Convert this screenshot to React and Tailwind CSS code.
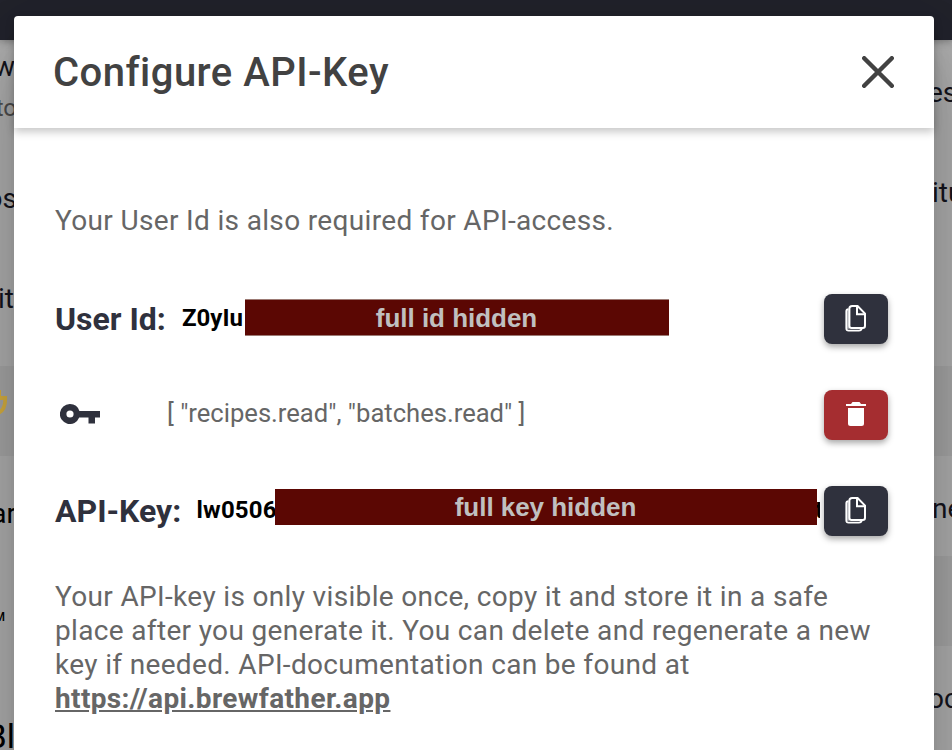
const leftRows = [
  { text: "New", cls: "h-[50px] text-[28px] leading-[54px] text-[#15151d]", shift: "-mr-[1px]" },
  { text: "to", cls: "h-[60px] text-[24px] leading-[37px] text-[#505050]", shift: "-mr-[3px]" },
  { text: "os", cls: "h-[100px] text-[28px] leading-[97px] text-[#15151d]", shift: "-mr-[3px]" },
  { text: "it", cls: "h-[116px] text-[28px] leading-[98px] text-[#15151d]", shift: "mr-0" },
];

const rightRows = [
  { text: "es", cls: "h-[100px] text-[28px] leading-[106px] text-[#15151d]", shift: "-ml-[6px]" },
  { text: "itu", cls: "h-[226px] text-[28px] leading-[106px] text-[#15151d]", shift: "-ml-[2px]" },
];

function CopyIcon() {
  return (
    <svg width="24" height="28" viewBox="0 0 24 28" fill="none" stroke="#fff" strokeWidth="2">
      <path d="M2.6 5 H5.4 V23.8 H2.6 Z" fill="#a3a4ab" stroke="none" />
      <path d="M8.2 1.1 H13.6 L21 8.6 V20.8 Q21 23 18.8 23 H7.4 Q5.4 23 5.4 20.8 V3.6 Q5.4 1.1 8.2 1.1 Z" />
      <path d="M13 1.4 V9.2 H21" />
      <path d="M4.6 4.2 Q2.3 4.4 2.3 6.2 V23.2 Q2.3 25.6 4.6 25.6 H15 Q17.2 25.6 18 23.4" strokeWidth="1.8" />
    </svg>
  );
}

function ActionButton({ color, label, children }) {
  return (
    <button
      aria-label={label}
      className={`flex h-[50px] w-16 shrink-0 items-center justify-center rounded-lg shadow-[0_3px_6px_rgba(0,0,0,0.35)] ${color}`}
    >
      {children}
    </button>
  );
}

function Backdrop() {
  return (
    <div className="flex h-full flex-col bg-[#b1b1b1]">
      <div className="z-10 h-10 shrink-0 bg-[#22232c] shadow-[0_1px_8px_rgba(0,0,0,0.35)]" />
      <div className="flex flex-1 justify-between">
        <div className="flex w-[14px] flex-col overflow-hidden">
          {leftRows.map((r) => (
            <div key={r.text} className={`flex shrink-0 justify-end ${r.cls}`}>
              <span className={r.shift}>{r.text}</span>
            </div>
          ))}
          <div className="h-[90px] shrink-0 bg-[#a8a8a8]">
            <svg width="14" height="90" viewBox="0 0 14 90" fill="none" stroke="#d8b040" strokeWidth="3.8">
              <path d="M-4 32 H5.2 Q5.6 44 -2 47" />
              <path d="M0 24 V32" strokeWidth="2" />
            </svg>
          </div>
          <div className="flex h-[100px] shrink-0 justify-end text-[28px] leading-[115px] text-black">
            <span className="-mr-[2px]">ar</span>
          </div>
          <div className="flex h-[90px] shrink-0 justify-end text-[12px] leading-[123px] font-medium text-black">
            <span className="mr-[9px]">M</span>
          </div>
          <div className="flex h-[104px] shrink-0 justify-end text-[34px] leading-[181px] text-black">
            <span className="-mr-[1px]">Bl</span>
          </div>
        </div>
        <div className="flex w-[18px] flex-col overflow-hidden">
          {rightRows.map((r) => (
            <div key={r.text} className={`flex shrink-0 ${r.cls}`}>
              <span className={r.shift}>{r.text}</span>
            </div>
          ))}
          <div className="h-[90px] shrink-0 bg-[#a8a8a8]" />
          <div className="h-[100px] shrink-0 text-[28px] leading-[106px] text-[#15151d]">
            <span className="-ml-[2px]">ne</span>
          </div>
          <div className="h-[90px] shrink-0 bg-[#a8a8a8]" />
          <div className="h-[104px] shrink-0 text-[28px] leading-[106px] text-[#15151d]">
            <span className="-ml-[6px]">oc</span>
          </div>
        </div>
      </div>
    </div>
  );
}

export default function App() {
  return (
    <div className="relative h-[750px] w-[952px] overflow-hidden font-[Roboto,sans-serif]">
      <Backdrop />
      <div className="absolute top-4 left-[14px] z-20 flex h-[800px] w-[920px] flex-col rounded-[4px] bg-white shadow-[0_22px_30px_-14px_rgba(0,0,0,0.2),0_48px_76px_6px_rgba(0,0,0,0.14),0_18px_92px_16px_rgba(0,0,0,0.12)]">
        <header className="flex h-28 shrink-0 items-center justify-between rounded-t-[4px] pr-10 pl-[39px] shadow-[0_4px_8px_rgba(0,0,0,0.22)]">
          <h1 className="mt-[2px] text-[40px] font-medium tracking-[0.47px] whitespace-nowrap text-[#424242]">Configure API-Key</h1>
          <button aria-label="Close">
            <svg width="32" height="32" viewBox="0 0 32 32" stroke="#424242" strokeWidth="4.4" strokeLinecap="round">
              <path d="M2.2 2.2 L29.8 29.8 M29.8 2.2 L2.2 29.8" />
            </svg>
          </button>
        </header>
        <main className="flex flex-col pr-[46px] pl-[41px]">
          <p className="mt-[76px] text-[28px] leading-[34px] tracking-[0.34px] whitespace-nowrap text-[#666]">
            Your User Id is also required for API-access.
          </p>
          <section className="mt-14 flex h-[50px] items-center justify-between">
            <div className="flex items-center">
              <h2 className="w-[127px] shrink-0 text-[32px] font-bold whitespace-nowrap text-[#2f313d]">User Id:</h2>
              <span className="-mt-[2px] w-[63px] shrink-0 text-[24px] font-bold whitespace-nowrap text-black">Z0yIu</span>
              <div className="-mt-[3px] flex h-[37px] w-[424px] items-center justify-center border-y border-[#9c7a74] bg-[#5b0703] font-['Liberation_Sans',sans-serif] text-[26px] font-bold text-[#c0c0c0]">
                <span className="mt-px mr-[1px] tracking-[-0.03px]">full id hidden</span>
              </div>
            </div>
            <ActionButton color="bg-[#2f313d]" label="Copy user id"><CopyIcon /></ActionButton>
          </section>
          <section className="mt-[46px] flex h-[50px] items-center">
            <svg className="-mt-[2px] ml-[5px] shrink-0" width="40" height="20" viewBox="0 0 40 20" fill="#2f313d">
              <path fillRule="evenodd" d="M10 0 A10 10 0 1 0 19.2 13.6 H28.5 V19.4 H35 V13.6 H40 V7 H19.4 A10 10 0 0 0 10 0 Z M10 6.4 A3.6 3.6 0 1 1 10 13.6 A3.6 3.6 0 1 1 10 6.4 Z" />
            </svg>
            <span className="-mt-[3px] ml-[67px] flex-1 text-[25.6px] whitespace-nowrap text-[#666]">[ "recipes.read", "batches.read" ]</span>
            <ActionButton color="bg-[#a52d30]" label="Delete key">
              <svg className="-mt-[2px]" width="20" height="24" viewBox="0 0 20 24" fill="#fff">
                <path d="M0 2 H5 L6.5 0 H13.5 L15 2 H20 V4 H0 Z M2 6 H18 V21.5 Q18 24 15.5 24 H4.5 Q2 24 2 21.5 Z" />
              </svg>
            </ActionButton>
          </section>
          <section className="mt-[46px] flex h-[50px] items-center">
            <h2 className="w-[141.5px] shrink-0 text-[32px] font-bold whitespace-nowrap text-[#2f313d]">API-Key:</h2>
            <span className="-mt-[2px] w-[78.5px] shrink-0 text-[24px] font-bold tracking-[0.2px] whitespace-nowrap text-black">lw0506</span>
            <div className="-mt-[8px] flex h-9 w-[542px] shrink-0 items-center justify-center bg-[#5b0703] font-['Liberation_Sans',sans-serif] text-[26px] font-bold text-[#c0c0c0]">
              <span className="mr-[1px] tracking-[-0.03px]">full key hidden</span>
            </div>
            <span className="-mt-[2px] mr-[4px] flex w-[3px] shrink-0 overflow-hidden text-[24px] font-bold text-black">
              <span className="-ml-[2px]">t</span>
            </span>
            <ActionButton color="bg-[#2f313d]" label="Copy API key"><CopyIcon /></ActionButton>
          </section>
          <p className="mt-[44px] text-[28px] leading-[34px] tracking-[0.34px] whitespace-nowrap text-[#666]">
            Your API-key is only visible once, copy it and store it in a safe<br />
            place after you generate it. You can delete and regenerate a new<br />
            key if needed. API-documentation can be found at<br />
            <a className="font-bold tracking-[0.37px] underline">https://api.brewfather.app</a>
          </p>
        </main>
      </div>
    </div>
  );
}
